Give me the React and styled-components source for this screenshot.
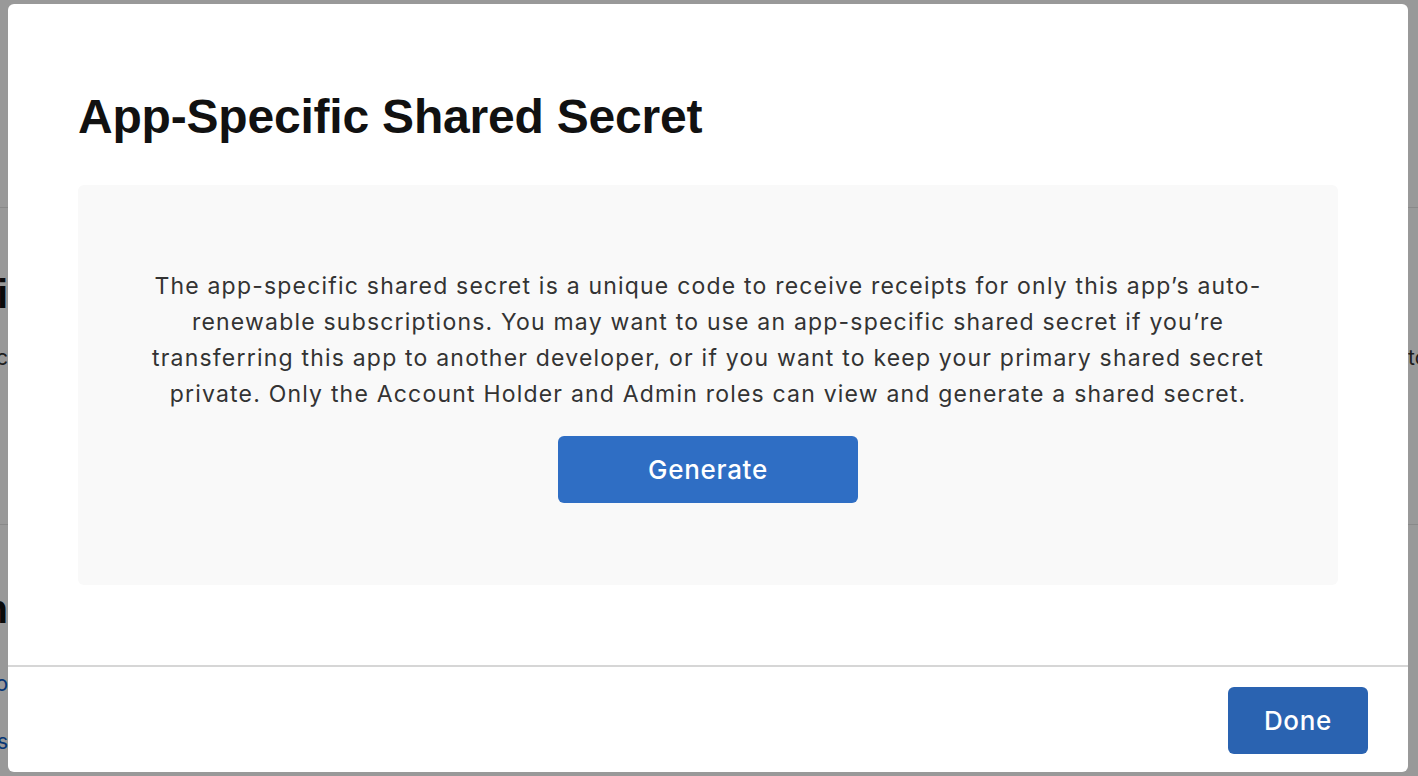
import React from "react";
import styled, { createGlobalStyle } from "styled-components";

const GlobalStyle = createGlobalStyle`
  html, body {
    margin: 0;
    padding: 0;
    height: 100%;
    overflow: hidden;
    background: #ffffff;
  }
  body {
    font-family: "Liberation Sans", Arial, sans-serif;
  }
  * { box-sizing: border-box; }
`;

/* ---------- page behind the dialog ---------- */
const BehindPage = styled.div`
  position: fixed;
  inset: 0;
  background: #ffffff;
  display: flex;
  flex-direction: column;
  overflow: hidden;
`;

const PageBand = styled.div`
  height: ${(p) => p.$height}px;
  border-bottom: 1px solid #e4e4e4;
  flex-shrink: 0;
`;

const PageSection = styled.section`
  display: flex;
  flex-direction: column;
  padding-top: ${(p) => p.$padTop}px;
  height: ${(p) => (p.$height ? `${p.$height}px` : "auto")};
  border-bottom: ${(p) => (p.$divider ? "1px solid #e4e4e4" : "none")};
  flex-shrink: 0;
`;

const PageRow = styled.div`
  display: flex;
  justify-content: space-between;
  margin-top: ${(p) => p.$mt || 0}px;
  white-space: nowrap;
  font-family: ${(p) =>
    p.$kind === "heading" ? '"Liberation Sans", Arial, sans-serif' : 'Inter, "Noto Sans", sans-serif'};
  font-size: ${(p) => (p.$kind === "heading" ? 40 : 21)}px;
  font-weight: ${(p) => (p.$kind === "heading" ? 700 : 400)};
  line-height: ${(p) => (p.$kind === "heading" ? 48 : 30)}px;
  color: ${(p) => (p.$kind === "heading" ? "#111" : p.$kind === "link" ? "#0a5bc4" : "#333")};
`;

const LeftFragment = styled.div`
  width: 8px;
  display: flex;
  justify-content: flex-end;
`;

const RightFragment = styled.div`
  width: 10px;
  display: flex;
  justify-content: flex-start;
`;

/* ---------- dialog ---------- */
const Scrim = styled.div`
  position: fixed;
  inset: 0;
  background: rgba(0, 0, 0, 0.4);
  display: flex;
  padding: 4px 10px 4px 8px;
`;

const Dialog = styled.div`
  flex: 1;
  background: #ffffff;
  border-radius: 6px;
  display: flex;
  flex-direction: column;
  overflow: hidden;
`;

const DialogBody = styled.div`
  padding: 84px 70px 80px;
  display: flex;
  flex-direction: column;
`;

const Title = styled.h1`
  margin: 0 0 39px;
  font-family: "Liberation Sans", Arial, sans-serif;
  font-size: 48px;
  font-weight: 700;
  line-height: 1.2;
  letter-spacing: -0.2px;
  color: #111111;
`;

const InfoPanel = styled.div`
  background: #f9f9f9;
  border-radius: 6px;
  padding: 83px 66px 82px;
  display: flex;
  flex-direction: column;
  align-items: center;
  gap: 24px;
`;

const InfoText = styled.p`
  margin: 0;
  text-align: center;
  font-family: Inter, "Noto Sans", sans-serif;
  font-size: 23px;
  letter-spacing: 1.2px;
  line-height: 36px;
  color: #333333;
`;

const Button = styled.button`
  width: ${(p) => p.$width}px;
  height: 67px;
  border: none;
  border-radius: 6px;
  background: ${(p) => (p.$tone === "dark" ? "#2a63b1" : "#2f6ec4")};
  color: #ffffff;
  font-family: Inter, "Noto Sans", sans-serif;
  font-size: 26px;
  font-weight: 500;
  letter-spacing: 0.7px;
  cursor: pointer;
  padding: 0;
`;

const Footer = styled.div`
  margin-top: auto;
  border-top: 2px solid #d6d6d6;
  padding: 20px 40px 18px;
  display: flex;
  justify-content: flex-end;
`;

export default function App() {
  return (
    <>
      <GlobalStyle />
      <BehindPage aria-hidden="true">
        <PageBand $height={208} />
        <PageSection $padTop={62} $height={317} $divider>
          <PageRow $kind="heading">
            <LeftFragment>i</LeftFragment>
            <RightFragment />
          </PageRow>
          <PageRow $kind="text" $mt={25}>
            <LeftFragment>c</LeftFragment>
            <RightFragment>to</RightFragment>
          </PageRow>
        </PageSection>
        <PageSection $padTop={60}>
          <PageRow $kind="heading">
            <LeftFragment>n</LeftFragment>
            <RightFragment />
          </PageRow>
          <PageRow $kind="link" $mt={36}>
            <LeftFragment>o</LeftFragment>
            <RightFragment />
          </PageRow>
          <PageRow $kind="link" $mt={28}>
            <LeftFragment>s</LeftFragment>
            <RightFragment />
          </PageRow>
        </PageSection>
      </BehindPage>

      <Scrim>
        <Dialog role="dialog" aria-modal="true" aria-labelledby="dialog-title">
          <DialogBody>
            <Title id="dialog-title">App-Specific Shared Secret</Title>
            <InfoPanel>
              <InfoText>
                The app-specific shared secret is a unique code to receive receipts for only this app’s auto-renewable
                subscriptions. You may want to use an app-specific shared secret if you’re transferring this app to
                another developer, or if you want to keep your primary shared secret private. Only the Account Holder
                and Admin roles can view and generate a shared secret.
              </InfoText>
              <Button $width={300}>Generate</Button>
            </InfoPanel>
          </DialogBody>
          <Footer>
            <Button $width={140} $tone="dark">
              Done
            </Button>
          </Footer>
        </Dialog>
      </Scrim>
    </>
  );
}
